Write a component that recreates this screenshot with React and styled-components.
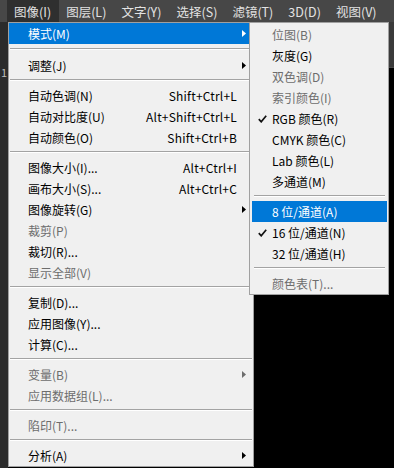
import React from "react";
import styled, { createGlobalStyle } from "styled-components";

const GlobalStyle = createGlobalStyle`
  html, body {
    margin: 0;
    padding: 0;
    background: #000;
  }
  * {
    box-sizing: border-box;
  }
`;

const FONT = `"Noto Sans CJK SC", "Liberation Sans", sans-serif`;

const Page = styled.div`
  position: relative;
  width: 394px;
  height: 468px;
  overflow: hidden;
  background: #000;
  font-family: ${FONT};
  display: flex;
  flex-direction: column;
`;

const MenuBar = styled.div`
  height: 22px;
  flex: none;
  display: flex;
  align-items: stretch;
  padding-left: 7px;
  background: #474747;
`;

const BarItem = styled.div`
  display: flex;
  align-items: center;
  padding: 0 8px 0 7px;
  font-size: 12.5px;
  color: #e2e2e2;
  background: ${(p) => (p.$active ? "#2f2f2f" : "transparent")};
  white-space: nowrap;
`;

const Workspace = styled.div`
  flex: 1;
  display: flex;
`;

const Ruler = styled.div`
  width: 8px;
  flex: none;
  background: #2b2b2b;
  color: #bdbdbd;
  font-size: 11px;
  padding-top: 42px;
  overflow: hidden;
  text-indent: 1px;
`;

const Canvas = styled.div`
  flex: 1;
  display: flex;
  flex-direction: column;
  background: #000;
`;

const TabStrip = styled.div`
  height: 46px;
  background: #3a3a3a;
  border-bottom: 1px solid #4a4a4a;
`;

const Dropdown = styled.div`
  position: absolute;
  top: 22px;
  left: ${(p) => p.$left}px;
  width: ${(p) => p.$width}px;
  background: #f0f0f0;
  border: 1px solid #a0a0a0;
  padding: ${(p) => p.$pad};
  display: flex;
  flex-direction: column;
`;

const Row = styled.div`
  height: 21px;
  display: grid;
  grid-template-columns: ${(p) => p.$indent}px 1fr auto ${(p) => p.$arrowCol}px;
  align-items: center;
  font-size: 12px;
  color: ${(p) => (p.$hi ? "#fff" : p.$off ? "#6d6d6d" : "#000")};
  background: ${(p) => (p.$hi ? "#0078d7" : "transparent")};
  white-space: nowrap;
`;

const CheckCell = styled.div`
  display: flex;
  align-items: center;
  padding-left: 6px;
`;

const Shortcut = styled.span`
  text-align: right;
  letter-spacing: 0.2px;
`;

const ArrowCell = styled.div`
  display: flex;
  align-items: center;
  padding-left: 5px;
`;

const Separator = styled.div`
  flex: none;
  height: ${(p) => (p.$tall ? 11 : 9)}px;
  padding-top: ${(p) => (p.$tall ? 4 : 3)}px;
  margin: 0 ${(p) => p.$inset}px;

  &::before {
    content: "";
    display: block;
    height: 1px;
    background: #a3a3a3;
    border-bottom: 1px solid #ffffff;
    box-sizing: content-box;
  }
`;

const Arrow = ({ color }) => (
  <svg width="4" height="7" viewBox="0 0 4 7">
    <polygon points="0,0 4,3.5 0,7" fill={color} />
  </svg>
);

const Check = () => (
  <svg width="9" height="8" viewBox="0 0 9 8">
    <polyline points="0.8,4.2 3.2,6.8 8.2,0.8" fill="none" stroke="#111" strokeWidth="1.7" />
  </svg>
);

const bar = ["图像(I)", "图层(L)", "文字(Y)", "选择(S)", "滤镜(T)", "3D(D)", "视图(V)"];

const mainItems = [
  { label: "模式(M)", sub: true, hi: true },
  { sep: true, tall: true },
  { label: "调整(J)", sub: true },
  { sep: true },
  { label: "自动色调(N)", key: "Shift+Ctrl+L" },
  { label: "自动对比度(U)", key: "Alt+Shift+Ctrl+L" },
  { label: "自动颜色(O)", key: "Shift+Ctrl+B" },
  { sep: true },
  { label: "图像大小(I)...", key: "Alt+Ctrl+I" },
  { label: "画布大小(S)...", key: "Alt+Ctrl+C" },
  { label: "图像旋转(G)", sub: true },
  { label: "裁剪(P)", off: true },
  { label: "裁切(R)..." },
  { label: "显示全部(V)", off: true },
  { sep: true },
  { label: "复制(D)..." },
  { label: "应用图像(Y)..." },
  { label: "计算(C)..." },
  { sep: true },
  { label: "变量(B)", sub: true, off: true },
  { label: "应用数据组(L)...", off: true },
  { sep: true },
  { label: "陷印(T)...", off: true },
  { sep: true },
  { label: "分析(A)", sub: true },
];

const modeItems = [
  { label: "位图(B)", off: true },
  { label: "灰度(G)" },
  { label: "双色调(D)", off: true },
  { label: "索引颜色(I)", off: true },
  { label: "RGB 颜色(R)", check: true },
  { label: "CMYK 颜色(C)" },
  { label: "Lab 颜色(L)" },
  { label: "多通道(M)" },
  { sep: true },
  { label: "8 位/通道(A)", hi: true },
  { label: "16 位/通道(N)", check: true },
  { label: "32 位/通道(H)" },
  { sep: true },
  { label: "颜色表(T)...", off: true },
];

function MenuList({ items, indent, arrowCol, inset }) {
  return items.map((it, i) =>
    it.sep ? (
      <Separator key={i} $tall={it.tall} $inset={inset} />
    ) : (
      <Row key={i} $hi={it.hi} $off={it.off} $indent={indent} $arrowCol={arrowCol}>
        <CheckCell>{it.check && <Check />}</CheckCell>
        <span>{it.label}</span>
        <Shortcut>{it.key}</Shortcut>
        <ArrowCell>{it.sub && <Arrow color={it.hi ? "#fff" : it.off ? "#6d6d6d" : "#000"} />}</ArrowCell>
      </Row>
    )
  );
}

export default function App() {
  return (
    <>
      <GlobalStyle />
      <Page>
        <MenuBar>
          {bar.map((b, i) => (
            <BarItem key={b} $active={i === 0}>
              {b}
            </BarItem>
          ))}
        </MenuBar>
        <Workspace>
          <Ruler>1</Ruler>
          <Canvas>
            <TabStrip />
          </Canvas>
        </Workspace>

        <Dropdown $left={8} $width={246} $pad="0">
          <MenuList items={mainItems} indent={19} arrowCol={16} inset={1} />
        </Dropdown>

        <Dropdown $left={249} $width={140} $pad="1px 1px 0 2px">
          <MenuList items={modeItems} indent={20} arrowCol={2} inset={2} />
        </Dropdown>
      </Page>
    </>
  );
}
